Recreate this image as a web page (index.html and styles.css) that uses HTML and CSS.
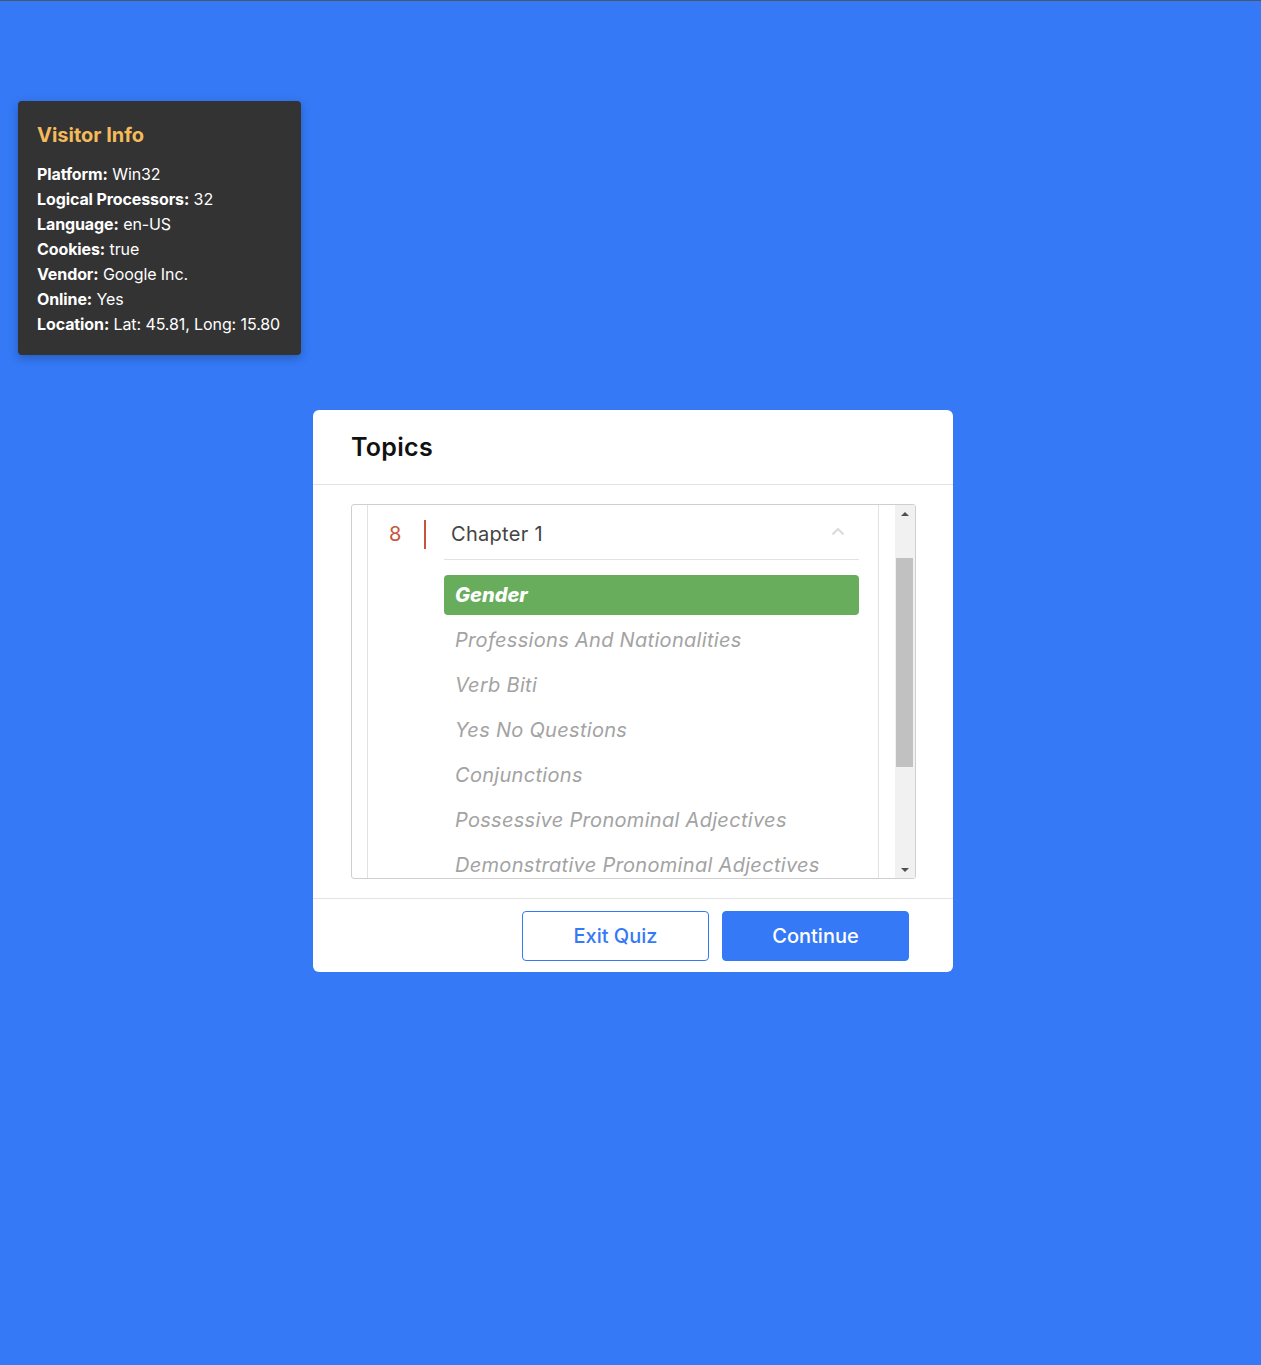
FILE: index.html
```html
<!DOCTYPE html>
<html lang="en">
<head>
<meta charset="utf-8">
<title>Topics</title>
<link rel="stylesheet" href="styles.css">
</head>
<body>
<div class="page">
  <aside class="visitor">
    <h2 class="visitor-title">Visitor Info</h2>
    <ul class="visitor-list">
      <li><b>Platform:</b> Win32</li>
      <li><b>Logical Processors:</b> 32</li>
      <li><b>Language:</b> en-US</li>
      <li><b>Cookies:</b> true</li>
      <li><b>Vendor:</b> Google Inc.</li>
      <li><b>Online:</b> Yes</li>
      <li><b>Location:</b> Lat: 45.81, Long: 15.80</li>
    </ul>
  </aside>

  <section class="modal">
    <header class="modal-header">
      <h1 class="modal-title">Topics</h1>
    </header>
    <div class="modal-body">
      <div class="listbox">
        <div class="list-scroll">
          <div class="list-col">
            <div class="chapter">
              <span class="chapter-num">8</span>
              <span class="chapter-bar"></span>
              <div class="chapter-head">
                <span class="chapter-name">Chapter 1</span>
                <svg class="chevron" width="14" height="9" viewBox="0 0 14 9"><path d="M1.5 7.5 L7 2 L12.5 7.5" fill="none" stroke="#dcdcdc" stroke-width="2.2"/></svg>
              </div>
            </div>
            <ul class="topics">
              <li class="topic active">Gender</li>
              <li class="topic">Professions And Nationalities</li>
              <li class="topic">Verb Biti</li>
              <li class="topic">Yes No Questions</li>
              <li class="topic">Conjunctions</li>
              <li class="topic">Possessive Pronominal Adjectives</li>
              <li class="topic">Demonstrative Pronominal Adjectives</li>
              <li class="topic">Personal Pronouns</li>
            </ul>
          </div>
        </div>
        <div class="scrollbar">
          <span class="sb-arrow sb-up"></span>
          <div class="sb-track"><span class="sb-thumb"></span></div>
          <span class="sb-arrow sb-down"></span>
        </div>
      </div>
    </div>
    <footer class="modal-footer">
      <button class="btn btn-outline">Exit Quiz</button>
      <button class="btn btn-primary">Continue</button>
    </footer>
  </section>
</div>
</body>
</html>
```

FILE: styles.css
```css
* { box-sizing: border-box; }
html, body { margin: 0; padding: 0; }
body {
  background: #3579f6;
  border-top: 1px solid #4b556b;
  font-family: "Inter", "Open Sans", sans-serif;
  min-height: 1365px;
}
.page {
  display: flex;
  flex-direction: column;
  align-items: flex-start;
}
.visitor {
  margin: 100px 0 0 18px;
  width: 283px;
  height: 254px;
  background: #333333;
  border-radius: 4px;
  padding: 20px 18px 20px 19px;
  box-shadow: 0 3px 10px rgba(0,0,0,0.25);
  color: #fff;
}
.visitor-title {
  margin: 0 0 13px;
  font-size: 20px;
  line-height: 28px;
  font-weight: 700;
  color: #f4bb5c;
  letter-spacing: 0;
}
.visitor-list {
  list-style: none;
  margin: 0;
  padding: 0;
  font-size: 16px;
  line-height: 25px;
  letter-spacing: -0.1px;
  white-space: nowrap;
}
.visitor-list b { font-weight: 700; }

.modal {
  margin: 55px 0 0 313px;
  width: 640px;
  background: #fff;
  border-radius: 6px;
}
.modal-header {
  height: 75px;
  border-bottom: 1px solid #e3e3e3;
  padding: 0 38px;
  display: flex;
  align-items: center;
}
.modal-title {
  margin: 0;
  font-size: 25px;
  font-weight: 600;
  color: #111;
  letter-spacing: 0.3px;
}
.modal-body {
  padding: 19px 37px 19px 38px;
}
.listbox {
  height: 375px;
  border: 1px solid #cfcfcf;
  border-radius: 3px;
  display: flex;
  overflow: hidden;
}
.list-scroll {
  flex: 1;
  overflow: hidden;
  padding: 0 16px 0 15px;
}
.list-col {
  height: 100%;
  border-left: 1px solid #e2e2e2;
  border-right: 1px solid #e2e2e2;
  padding: 0 19px 0 76px;
  position: relative;
}
.chapter {
  display: flex;
  align-items: center;
  height: 55px;
  border-bottom: 1px solid #e2e2e2;
}
.chapter-num {
  position: absolute;
  left: 21px;
  top: 15px;
  font-size: 20px;
  line-height: 28px;
  color: #c6553d;
}
.chapter-bar {
  position: absolute;
  left: 56px;
  top: 15px;
  width: 2px;
  height: 29px;
  background: #c6553d;
}
.chapter-head {
  flex: 1;
  display: flex;
  align-items: center;
  justify-content: space-between;
  padding: 3px 14px 0 7px;
}
.chapter-name {
  font-size: 20px;
  color: #444;
  letter-spacing: 0.3px;
}
.chevron { display: block; margin-top: -4px; }
.topics {
  list-style: none;
  margin: 0;
  padding: 15px 0 0;
}
.topic {
  height: 40px;
  margin-bottom: 5px;
  padding: 0 11px;
  display: flex;
  align-items: center;
  font-size: 20px;
  font-style: italic;
  color: #a3a3a3;
  white-space: nowrap;
  letter-spacing: 0.3px;
}
.topic.active {
  background: #68ad5c;
  color: #fff;
  font-weight: 800;
  border-radius: 4px;
  letter-spacing: 0;
}
.scrollbar {
  width: 20px;
  background: #f1f1f1;
  display: flex;
  flex-direction: column;
  align-items: center;
}
.sb-arrow {
  height: 17px;
  width: 100%;
  display: flex;
  align-items: center;
  justify-content: center;
}
.sb-up::before, .sb-down::before {
  content: "";
  border-left: 4px solid transparent;
  border-right: 4px solid transparent;
}
.sb-up::before { border-bottom: 4px solid #505050; }
.sb-down::before { border-top: 4px solid #505050; }
.sb-track {
  flex: 1;
  width: 100%;
  padding: 36px 0 0 1px;
}
.sb-thumb {
  display: block;
  width: 17px;
  height: 209px;
  background: #c1c1c1;
}
.modal-footer {
  border-top: 1px solid #e3e3e3;
  padding: 12px 44px 11px 0;
  display: flex;
  justify-content: flex-end;
  gap: 13px;
}
.btn {
  width: 187px;
  height: 50px;
  border-radius: 4px;
  font-family: inherit;
  font-size: 20px;
  font-weight: 500;
  line-height: 1.2;
  padding: 0;
  cursor: pointer;
}
.btn-outline {
  background: #fff;
  color: #3579f6;
  border: 1px solid #3579f6;
}
.btn-primary {
  background: #3579f6;
  color: #fff;
  border: 1px solid #3579f6;
}
```
